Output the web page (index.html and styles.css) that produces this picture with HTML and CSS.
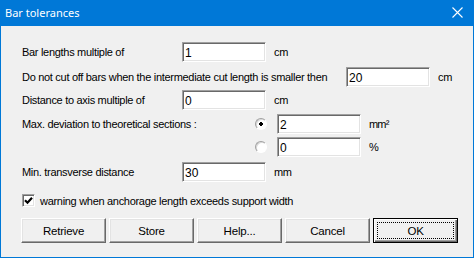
FILE: index.html
```html
<!DOCTYPE html>
<html lang="en">
<head>
  <meta charset="UTF-8" />
  <title>Bar tolerances</title>
  <link rel="stylesheet" href="styles.css">
</head>
<body>
  <div class="window">
    <div class="titlebar">
      <span class="title">Bar tolerances</span>
      <svg class="close" width="11" height="11" viewBox="0 0 11 11">
        <path d="M0.5 0.5L10.5 10.5M10.5 0.5L0.5 10.5" stroke="#fff" stroke-width="1.1"/>
      </svg>
    </div>

    <div class="content">
      <div class="row r-first">
        <label class="lbl">Bar lengths multiple of</label>
        <input class="field" type="text" value="1">
        <span class="unit">cm</span>
      </div>

      <div class="row r-cut">
        <label class="lbl lbl-wide">Do not cut off bars when the intermediate cut length is smaller then</label>
        <input class="field" type="text" value="20">
        <span class="unit">cm</span>
      </div>

      <div class="row r-axis">
        <label class="lbl">Distance to axis multiple of</label>
        <input class="field" type="text" value="0">
        <span class="unit">cm</span>
      </div>

      <div class="dev">
        <label class="lbl lbl-dev">Max. deviation to theoretical sections :</label>
        <div class="options">
          <div class="row">
            <input class="radio" type="radio" name="dev" checked>
            <input class="field" type="text" value="2">
            <span class="unit unit-sq">mm²</span>
          </div>
          <div class="row r-opt2">
            <input class="radio" type="radio" name="dev">
            <input class="field" type="text" value="0">
            <span class="unit">%</span>
          </div>
        </div>
      </div>

      <div class="row r-min">
        <label class="lbl">Min. transverse distance</label>
        <input class="field" type="text" value="30">
        <span class="unit">mm</span>
      </div>

      <div class="check-row">
        <span class="check">
          <svg width="9" height="9" viewBox="0 0 9 9">
            <path d="M1 4.2L3.5 6.7L8 1.8" fill="none" stroke="#000" stroke-width="2.2"/>
          </svg>
        </span>
        <span class="check-text">warning when anchorage length exceeds support width</span>
      </div>

      <div class="buttons">
        <button class="btn">Retrieve</button>
        <button class="btn">Store</button>
        <button class="btn">Help...</button>
        <button class="btn">Cancel</button>
        <button class="btn btn-default"><span class="focus">OK</span></button>
      </div>
    </div>
  </div>
</body>
</html>
```

FILE: styles.css
```css
body {
  margin: 0;
  font-family: 'Liberation Sans', Arial, sans-serif;
  font-size: 11px;
  letter-spacing: -0.3px;
  color: #000;
}

.window {
  width: 474px;
  height: 258px;
  box-sizing: border-box;
  border: 1px solid #0078d7;
  border-top: none;
  background: #f0f0f0;
}

.titlebar {
  height: 26px;
  background: #0078d7;
  display: flex;
  align-items: center;
  justify-content: space-between;
  padding: 0 10px 1px 4px;
  box-sizing: border-box;
  letter-spacing: 0;
}

.title {
  color: #fff;
  font-family: 'Noto Sans', sans-serif;
  font-size: 11px;
}

.content {
  padding: 16px 0 0 20px;
}

.row {
  display: flex;
  align-items: center;
  height: 20px;
  white-space: nowrap;
}

.r-cut { margin-top: 5px; }
.r-axis { margin-top: 3px; }
.r-opt2 { margin-top: 3px; }
.r-min { margin-top: 5px; }

.lbl {
  width: 161px;
  flex: none;
  padding-left: 1px;
  box-sizing: border-box;
}

.lbl-wide { width: 325px; }

.field {
  width: 84px;
  height: 20px;
  box-sizing: border-box;
  margin: 0;
  padding: 1px 2px 0;
  font-family: inherit;
  font-size: 12px;
  letter-spacing: 0;
  background: #fff;
  border: 1px solid;
  border-color: #a0a0a0 #fff #fff #a0a0a0;
  box-shadow: inset 1px 1px #696969, inset -1px -1px #e3e3e3;
  outline: none;
}

.unit {
  margin-left: 8px;
}

.unit-sq {
  letter-spacing: -0.8px;
}

.dev {
  display: flex;
  margin-top: 4px;
}

.lbl-dev {
  width: 234px;
  height: 20px;
  line-height: 20px;
}

.radio {
  appearance: none;
  width: 12px;
  height: 12px;
  margin: 0 10px 0 0;
  border-radius: 50%;
  border: 1px solid;
  border-color: #a0a0a0 #fff #fff #a0a0a0;
  background: #fff;
  box-shadow: inset 1px 1px #d8d8d8;
}

.radio:checked {
  background: radial-gradient(circle, #000 0 1.6px, #fff 2.1px);
}

.check-row {
  display: flex;
  align-items: center;
  margin-top: 12px;
  height: 13px;
  white-space: nowrap;
}

.check {
  width: 13px;
  height: 13px;
  box-sizing: border-box;
  margin-left: 1px;
  border: 1px solid;
  border-color: #a0a0a0 #fff #fff #a0a0a0;
  box-shadow: inset 1px 1px #696969, inset -1px -1px #e3e3e3;
  background: #fff;
  display: flex;
  align-items: center;
  justify-content: center;
}

.check-text {
  margin-left: 5px;
}

.buttons {
  display: flex;
  gap: 3px;
  margin-top: 11px;
}

.btn {
  width: 85px;
  height: 25px;
  margin: 0;
  padding: 0;
  font-family: inherit;
  font-size: 11.5px;
  letter-spacing: -0.2px;
  color: #000;
  background: #f0f0f0;
  border: 1px solid;
  border-color: #fff #696969 #696969 #fff;
  box-shadow: inset -1px -1px #a0a0a0, inset 1px 1px #e3e3e3;
}

.btn-default {
  border: 1px solid #000;
  box-shadow: inset 1px 1px #fff, inset -1px -1px #696969, inset -2px -2px #a0a0a0;
  padding: 3px;
}

.focus {
  display: flex;
  align-items: center;
  justify-content: center;
  height: 100%;
  border: 1px dotted #000;
  box-sizing: border-box;
}
```
